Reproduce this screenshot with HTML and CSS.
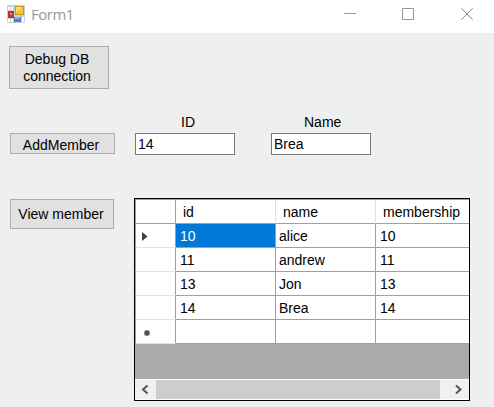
FILE: index.html
```html
<!DOCTYPE html>
<html lang="en">
<head>
<meta charset="utf-8">
<title>Form1</title>
<link rel="stylesheet" href="styles.css">
</head>
<body>
<header class="titlebar">
  <svg class="app-icon" width="18" height="18" viewBox="0 0 18 18">
    <rect width="18" height="18" rx="1" fill="#cfcfcf"/>
    <path d="M1 2h2v3H1zM4 2h2v3H4zM1 14h2v3H1zM4 14h2v3H4zM15 12h2v5h-2z" fill="#fff"/>
    <rect x="1" y="6" width="6" height="7" fill="#b5382c"/>
    <rect x="3" y="8" width="2" height="2" fill="#e98a7c"/>
    <rect x="8" y="1" width="9" height="9" fill="#c99612"/>
    <rect x="9" y="2" width="7" height="7" fill="#f5c63c"/>
    <path d="M9 2h6L9 7z" fill="#fbdc7c"/>
    <rect x="7" y="12" width="7" height="5" fill="#4a80d8"/>
    <rect x="8" y="12" width="5" height="2" fill="#82aef0"/>
  </svg>
  <span class="caption">Form1</span>
  <svg class="window-controls" width="130" height="12" viewBox="0 0 130 12" fill="none" stroke="#999">
    <path d="M0 5.500h12M58.500 .5h11v11h-11z"/>
    <path d="M117.300 .3l11.400 11.400M128.700 .3L117.300 11.700" stroke="#8c8c8c"/>
  </svg>
</header>
<main class="form">
  <button class="button debug">Debug DB<br>connection</button>
  <div class="entry">
    <button class="button add">AddMember</button>
    <label class="field"><span class="label label-id">ID</span><input class="input" value="14"></label>
    <label class="field field-name"><span class="label label-name">Name</span><input class="input" value="Brea"></label>
  </div>
  <div class="viewer">
    <button class="button view">View member</button>
    <section class="datagrid">
      <div class="row header"><div class="rowhead"></div><div class="cell">id</div><div class="cell">name</div><div class="cell">membership</div></div>
      <div class="row"><div class="rowhead"><svg width="6" height="10" viewBox="0 0 6 10"><path d="M0 0l5.500 4.500L0 9z" fill="#404040"/></svg></div><div class="cell number selected">10</div><div class="cell">alice</div><div class="cell number">10</div></div>
      <div class="row"><div class="rowhead"></div><div class="cell number">11</div><div class="cell">andrew</div><div class="cell number">11</div></div>
      <div class="row"><div class="rowhead"></div><div class="cell number">13</div><div class="cell">Jon</div><div class="cell number">13</div></div>
      <div class="row"><div class="rowhead"></div><div class="cell number">14</div><div class="cell">Brea</div><div class="cell number">14</div></div>
      <div class="row"><div class="rowhead new"><svg width="6" height="6" viewBox="0 0 6 6"><rect width="6" height="6" rx="2" fill="#a8a8a8"/><path d="M3 0v6M0 3h6" stroke="#606060"/><rect x="1" y="1" width="4" height="4" rx="1" fill="#505050"/></svg></div><div class="cell"></div><div class="cell"></div><div class="cell"></div></div>
      <div class="scrollbar">
        <svg class="arrow" width="21" height="19" viewBox="0 0 21 19"><path d="M12.500 5.500l-4.500 4 4.500 4" fill="none" stroke="#555" stroke-width="2"/></svg>
        <div class="thumb"></div>
        <svg class="arrow" width="29" height="19" viewBox="0 0 29 19"><path d="M16 5.500l4.500 4-4.500 4" fill="none" stroke="#555" stroke-width="2"/></svg>
      </div>
    </section>
  </div>
</main>
</body>
</html>
```
FILE: styles.css
```css
* {
  box-sizing: border-box;
}

body {
  margin: 0;
  height: 407px;
  overflow: hidden;
  background: #efefef;
  color: #000;
  font: 14px/17px "Liberation Sans", Arial, sans-serif;
}

svg {
  display: block;
}

.titlebar {
  display: flex;
  height: 33px;
  padding: 5px 20px 0 7px;
  background: #fff;
}

.caption {
  margin: 0 auto 0 6px;
  color: #999;
  font: 15px/19px "Open Sans", sans-serif;
  letter-spacing: -0.5px;
}

.window-controls {
  margin-top: 3px;
}

.form {
  padding: 13px 24px 0 9px;
}

.button {
  display: block;
  padding: 0;
  border: 1px solid #adadad;
  background: #e1e1e1;
  color: inherit;
  font: inherit;
  text-align: center;
}

.debug {
  width: 100px;
  height: 43px;
  padding-right: 4px;
}

.entry {
  display: flex;
  align-items: flex-end;
  height: 66px;
  padding-left: 1px;
}

.add {
  width: 105px;
  height: 21px;
  margin: 0 20px 1px 0;
  padding: 3px 3px 0 0;
  line-height: 16px;
}

.field {
  display: block;
  width: 100px;
}

.field-name {
  margin-left: 36px;
}

.label {
  display: block;
  height: 19px;
}

.label-id {
  padding-left: 46px;
}

.label-name {
  padding-left: 33px;
}

.input {
  display: block;
  width: 100%;
  height: 22px;
  padding: 0 2px;
  border: 1px solid #7a7a7a;
  background: #fff;
  color: inherit;
  font: inherit;
}

.viewer {
  display: flex;
  align-items: flex-start;
  margin-top: 43px;
  padding-left: 1px;
}

.view {
  width: 104px;
  height: 30px;
  margin: 1px 20px 0 0;
  padding-right: 2px;
}

.datagrid {
  display: flex;
  flex-direction: column;
  width: 336px;
  height: 203px;
  border: 1px solid #000;
  background: #ababab;
}

.row {
  display: grid;
  grid-template-columns: 41px 100px 100px 93px;
  grid-template-rows: 100%;
  height: 24px;
}

.cell,
.rowhead {
  border-right: 1px solid #a0a0a0;
  border-bottom: 1px solid #a0a0a0;
  background: #fff;
}

.cell {
  padding-left: 3px;
  line-height: 25px;
}

.cell:last-child {
  border-right: 0;
}

.rowhead {
  padding: 8px 0 0 6px;
  border-left: 1px solid #a0a0a0;
  border-bottom-color: #e3e3e3;
}

.rowhead.new {
  padding: 10px 0 0 8px;
}

.header {
  height: 25px;
  border-top: 1px solid #a0a0a0;
}

.header .cell {
  padding-left: 7px;
  border-right-color: #e3e3e3;
}

.header .rowhead {
  border-bottom-color: #a0a0a0;
}

.number {
  padding-left: 4px;
}

.selected {
  background: #0078d7;
  color: #fff;
}

.scrollbar {
  display: flex;
  height: 21px;
  margin-top: auto;
  border-top: 1px solid #fff;
  border-bottom: 1px solid #fff;
  background: #f0f0f0;
}

.thumb {
  flex: 1;
  background: #cdcdcd;
}
```
